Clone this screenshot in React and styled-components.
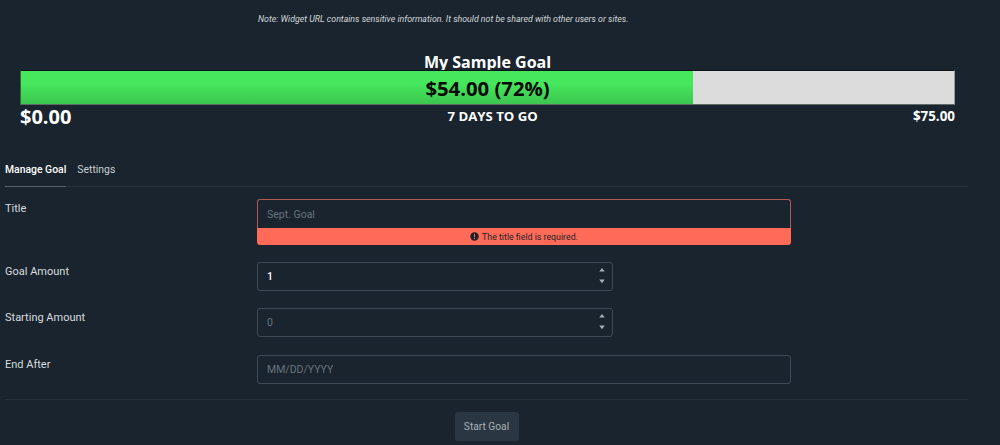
import React from "react";
import styled, { createGlobalStyle } from "styled-components";

const Global = createGlobalStyle`
  html, body { margin: 0; padding: 0; background: #19242e; height: 100%; overflow: hidden; }
  body { font-family: Roboto, "Liberation Sans", sans-serif; font-size: 12px; color: #dfe3e6; }
`;
const Page = styled.div`
  width: 1000px; height: 445px; overflow: hidden; box-sizing: border-box;
  padding: 13px 32px 0 5px; display: flex; flex-direction: column;
`;
const Note = styled.p`
  margin: 0 0 0 253px; font-size: 8.8px; line-height: 12px; font-style: italic; color: #d3d7da;
`;
const Widget = styled.section`
  margin: 23px 13px 0 15px; width: 935px; font-family: "Open Sans", sans-serif; font-weight: 700; color: #fff;
`;
const GoalTitle = styled.h1`
  margin: 0; font-size: 16px; line-height: 28px; height: 22px; text-align: center; font-weight: 700;
`;
const Bar = styled.div`
  height: 35px; box-sizing: border-box; display: flex; position: relative;
  background: #dcdcdc; border: 1px solid #9a9a9a; border-top-color: #0c1218; border-left-color: #2c6b38; border-bottom-color: #5d6a66;
`;
const Fill = styled.div`
  background: linear-gradient(#46e65d 0%, #46e65d 40%, #3cc64f 100%);
`;
const BarText = styled.div`
  position: absolute; inset: 0; display: flex; align-items: center; justify-content: center;
  color: #050a05; font-size: 20.3px; font-weight: 700;
`;
const Scale = styled.div`
  display: flex; justify-content: space-between; align-items: center; height: 25px; margin-top: -1px;
`;
const Start = styled.span`font-size: 20px; line-height: 25px;`;
const Mid = styled.span`font-size: 13.2px; margin: -2px 0 0 1px;`;
const End = styled.span`font-size: 13.4px; text-align: right; margin-top: -2px;`;
const Tabs = styled.nav`
  display: flex; gap: 11px; height: 40px; margin-top: 18px; border-bottom: 1px solid #26323c; box-sizing: border-box; width: 963px;
`;
const Tab = styled.a`
  font-size: 10.4px; font-weight: ${p => (p.$active ? 500 : 400)}; line-height: 46px; height: 40px; box-sizing: border-box;
  color: ${p => (p.$active ? "#fff" : "#c9ced2")};
  border-bottom: ${p => (p.$active ? "1px solid #59636b" : "none")};
`;
const Form = styled.form`display: flex; flex-direction: column; width: 963px;`;
const Row = styled.div`
  display: grid; grid-template-columns: 252px 1fr; margin-top: ${p => p.$mt}px;
`;
const Label = styled.label`font-size: 11px; line-height: 14px; color: #d8dcdf; padding-top: 3px;`;
const Control = styled.div`width: ${p => p.$w}px; position: relative;`;
const Input = styled.div`
  height: 29px; box-sizing: border-box; display: flex; align-items: center; padding: 0 9px;
  border: 1px solid ${p => (p.$error ? "#b05a4e" : "#3d4a55")};
  border-radius: ${p => (p.$error ? "3px 3px 0 0" : "3px")};
  border-bottom: ${p => (p.$error ? "none" : undefined)};
  font-size: 10.5px; color: ${p => (p.$value ? "#fff" : "#68747d")}; font-weight: ${p => (p.$value ? 500 : 400)};
`;
const Spinner = styled.svg`position: absolute; right: 6px; top: 5px;`;
const ErrorBar = styled.div`
  height: 17px; background: #ff6b58; border-radius: 0 0 3px 3px; color: #1c2228;
  display: flex; align-items: center; justify-content: center; gap: 3px; font-size: 8.8px;
`;
const Rule = styled.hr`margin: 15px 0 0; border: 0; border-top: 1px solid #26323c;`;
const Footer = styled.div`display: flex; justify-content: center; padding: 12px 0 0 0;`;
const Button = styled.button`
  width: 64px; height: 29px; background: #2a3742; border: 0; border-radius: 3px; color: #a9b0b6;
  font: 400 10.2px Roboto, sans-serif; padding: 0;
`;

const Arrows = () => (
  <Spinner width="10" height="18" viewBox="0 0 10 18" fill="#a8b0b6">
    <path d="M5 1 L7.7 4.6 H2.3 Z" />
    <path d="M5 16.2 L7.7 12.6 H2.3 Z" />
  </Spinner>
);

const Exclaim = () => (
  <svg width="9" height="9" viewBox="0 0 9 9">
    <circle cx="4.5" cy="4.5" r="4.2" fill="#1c2228" />
    <rect x="4" y="1.8" width="1" height="3.4" fill="#ff6b58" />
    <rect x="4" y="6" width="1" height="1.1" fill="#ff6b58" />
  </svg>
);

export default function App() {
  return (
    <Page>
      <Global />
      <Note>Note: Widget URL contains sensitive information. It should not be shared with other users or sites.</Note>
      <Widget>
        <GoalTitle>My Sample Goal</GoalTitle>
        <Bar>
          <Fill style={{ width: "72%" }} />
          <BarText>$54.00 (72%)</BarText>
        </Bar>
        <Scale>
          <Start>$0.00</Start>
          <Mid>7 DAYS TO GO</Mid>
          <End>$75.00</End>
        </Scale>
      </Widget>
      <Tabs>
        <Tab $active>Manage Goal</Tab>
        <Tab>Settings</Tab>
      </Tabs>
      <Form>
        <Row $mt={12}>
          <Label>Title</Label>
          <Control $w={534}>
            <Input $error>Sept. Goal</Input>
            <ErrorBar><Exclaim />The title field is required.</ErrorBar>
          </Control>
        </Row>
        <Row $mt={17}>
          <Label>Goal Amount</Label>
          <Control $w={356}>
            <Input $value>1</Input>
            <Arrows />
          </Control>
        </Row>
        <Row $mt={17}>
          <Label>Starting Amount</Label>
          <Control $w={356}>
            <Input>0</Input>
            <Arrows />
          </Control>
        </Row>
        <Row $mt={18}>
          <Label>End After</Label>
          <Control $w={534}>
            <Input>MM/DD/YYYY</Input>
          </Control>
        </Row>
        <Rule />
        <Footer>
          <Button type="button">Start Goal</Button>
        </Footer>
      </Form>
    </Page>
  );
}
